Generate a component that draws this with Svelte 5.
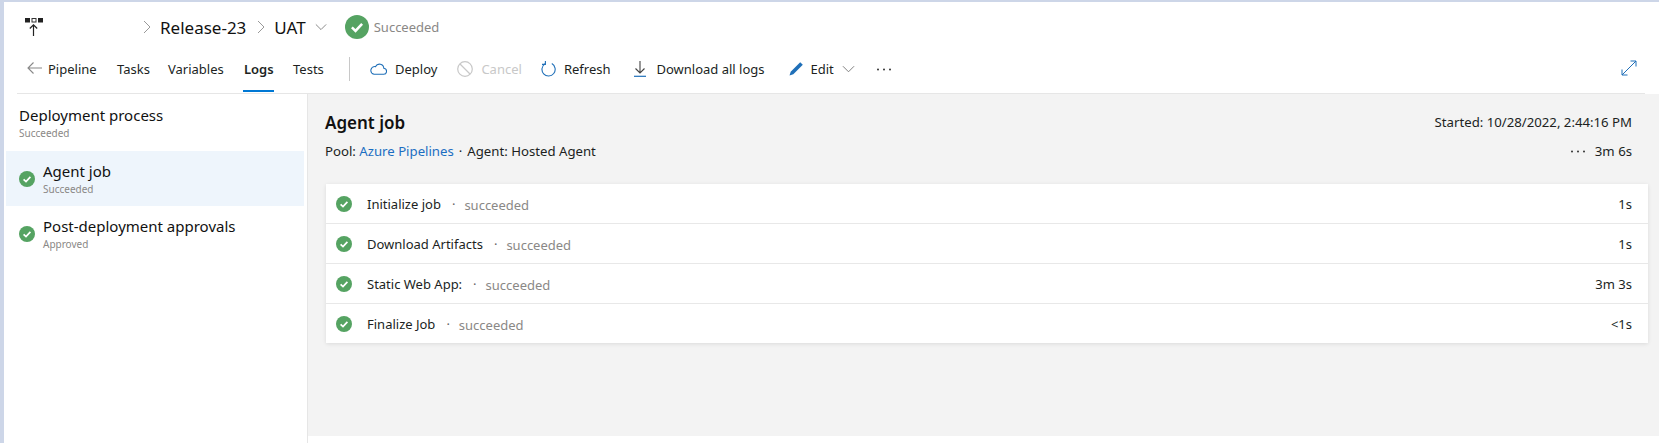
<script>
  const tabs = [
    { label: 'Pipeline', w: 69 },
    { label: 'Tasks', w: 51 },
    { label: 'Variables', w: 76 },
    { label: 'Logs', w: 49, active: true },
    { label: 'Tests', w: 40 }
  ];
  const steps = [
    { name: 'Initialize job', time: '1s' },
    { name: 'Download Artifacts', time: '1s' },
    { name: 'Static Web App:', time: '3m 3s' },
    { name: 'Finalize Job', time: '<1s' }
  ];
</script>

{#snippet check(size)}
  <svg class="check" width={size} height={size} viewBox="0 0 16 16" aria-hidden="true">
    <circle cx="8" cy="8" r="8" fill="#55a362" />
    <path d="M4.6 8.3 7 10.6 11.4 5.9" fill="none" stroke="#fff" stroke-width="1.7" />
  </svg>
{/snippet}

{#snippet chevron(w)}
  <svg width={w} height="8" viewBox="0 0 14 8" aria-hidden="true">
    <path d="M1 1l6 6 6-6" fill="none" stroke="#777" stroke-width="1" />
  </svg>
{/snippet}

{#snippet crumb()}
  <svg width="8" height="14" viewBox="0 0 8 14" aria-hidden="true">
    <path d="M1 1l6 6-6 6" fill="none" stroke="#999" stroke-width="1" />
  </svg>
{/snippet}

{#snippet dots()}
  <svg width="16" height="3" viewBox="0 0 16 3" aria-hidden="true">
    <circle cx="2" cy="1.5" r="1" fill="#333" />
    <circle cx="8" cy="1.5" r="1" fill="#333" />
    <circle cx="14" cy="1.5" r="1" fill="#333" />
  </svg>
{/snippet}

<div class="app">
  <header>
    <div class="title">
      <svg class="logo" width="20" height="20" viewBox="0 0 20 20" aria-hidden="true">
        <rect x="0" y="1" width="5" height="4.5" fill="#222" />
        <rect x="7" y="1.5" width="4" height="3.5" fill="#fff" stroke="#333" />
        <rect x="13" y="1" width="5" height="4.5" fill="#222" />
        <path d="M8.5 19V8M4.8 11.5l3.7-3.7 3.7 3.7" fill="none" stroke="#222" stroke-width="1.2" />
      </svg>
      <span class="crumb first">{@render crumb()}</span>
      <span class="name">Release-23</span>
      <span class="crumb">{@render crumb()}</span>
      <span class="name">UAT</span>
      <span class="drop">{@render chevron(12)}</span>
      <span class="big-check">{@render check(24)}</span>
      <span class="state">Succeeded</span>
    </div>
    <nav>
      <svg class="back" width="15" height="12" viewBox="0 0 15 12" aria-hidden="true">
        <path d="M15 6H1M6.5.5 1 6l5.5 5.5" fill="none" stroke="#888" stroke-width="1.1" />
      </svg>
      {#each tabs as t}
        <span class="tab" class:active={t.active} style="width:{t.w}px">{t.label}</span>
      {/each}
      <span class="divider"></span>
      <span class="cmd deploy">
        <svg width="17" height="12" viewBox="0 0 17 12" aria-hidden="true">
          <path d="M4 11.3h9.3a3 3 0 0 0 .5-6A4.3 4.3 0 0 0 5.6 3.6 3.9 3.9 0 0 0 4 11.3z" fill="none" stroke="#1f6fb8" stroke-width="1.1" />
        </svg>
        Deploy
      </span>
      <span class="cmd cancel">
        <svg width="16" height="16" viewBox="0 0 16 16" aria-hidden="true">
          <circle cx="8" cy="8" r="7.3" fill="none" stroke="#c8c8c8" stroke-width="1.2" />
          <path d="M3 3l10 10" stroke="#c8c8c8" stroke-width="1.2" />
        </svg>
        Cancel
      </span>
      <span class="cmd refresh">
        <svg width="15" height="16" viewBox="0 0 15 16" aria-hidden="true">
          <path d="M4 2.8a6.6 6.6 0 1 0 6.8-.2" fill="none" stroke="#1f6fb8" stroke-width="1.1" />
          <path d="M4.4 0v3.4H1" fill="none" stroke="#1f6fb8" stroke-width="1.1" />
        </svg>
        Refresh
      </span>
      <span class="cmd download">
        <svg width="16" height="16" viewBox="0 0 16 16" aria-hidden="true">
          <path d="M8 0v11.5M3.5 7.5 8 12l4.5-4.5" fill="none" stroke="#444" stroke-width="1.1" />
          <path d="M2 15.3h12" stroke="#1f6fb8" stroke-width="1.2" />
        </svg>
        Download all logs
      </span>
      <span class="cmd edit">
        <svg width="15" height="15" viewBox="0 0 15 15" aria-hidden="true">
          <path d="M0.5 14.5l1.2-3.8L11.2 1.2l2.6 2.6-9.5 9.5z" fill="#1f6fb8" />
        </svg>
        Edit
      </span>
      <span class="edit-drop">{@render chevron(13)}</span>
      <span class="more">{@render dots()}</span>
      <svg class="expand" width="16" height="16" viewBox="0 0 16 16" aria-hidden="true">
        <path d="M1 15 15 1M9.5 1H15v5.5M1 9.5V15h5.5" fill="none" stroke="#1f6fb8" stroke-width="1" />
      </svg>
    </nav>
  </header>

  <div class="body">
    <aside>
      <div class="process">
        <div class="item-title">Deployment process</div>
        <div class="item-sub">Succeeded</div>
      </div>
      <div class="item selected">
        {@render check(16)}
        <div>
          <div class="item-title">Agent job</div>
          <div class="item-sub">Succeeded</div>
        </div>
      </div>
      <div class="item">
        {@render check(16)}
        <div>
          <div class="item-title">Post-deployment approvals</div>
          <div class="item-sub">Approved</div>
        </div>
      </div>
    </aside>

    <main>
      <div class="job-head">
        <h1>Agent job</h1>
        <span>Started: 10/28/2022, 2:44:16 PM</span>
      </div>
      <div class="job-meta">
        <span>Pool: <a href="#pool">Azure Pipelines</a><span class="mid">·</span>Agent: Hosted Agent</span>
        <span class="total"><span class="total-dots">{@render dots()}</span>3m 6s</span>
      </div>
      <section class="card">
        {#each steps as s}
          <div class="row">
            {@render check(16)}
            <span class="step">{s.name}</span>
            <span class="sep">·</span>
            <span class="result">succeeded</span>
            <span class="time">{s.time}</span>
          </div>
        {/each}
      </section>
    </main>
  </div>
</div>

<style>
  :global(body) {
    margin: 0;
    background: #fff;
  }
  .app {
    width: 1659px;
    height: 443px;
    box-sizing: border-box;
    border-top: 2px solid #cdd6e8;
    border-left: 4px solid #cdd6e8;
    display: flex;
    flex-direction: column;
    font-family: "Noto Sans", "Open Sans", sans-serif;
    font-size: 13px;
    color: #201f1e;
    overflow: hidden;
  }
  svg {
    display: block;
    flex: none;
  }
  header {
    height: 92px;
    box-sizing: border-box;
    margin: 0 14px 0 13px;
    border-bottom: 1px solid #e6e6e6;
  }
  .title {
    height: 50px;
    display: flex;
    align-items: center;
    font-size: 17px;
  }
  .logo {
    margin-left: 8px;
  }
  .crumb.first {
    margin-left: 98px;
  }
  .crumb {
    display: block;
    margin: 0 9px 0 11px;
  }
  .name {
    color: #111;
  }
  .drop {
    margin-left: 9px;
  }
  .big-check {
    margin-left: 18px;
  }
  .state {
    margin-left: 5px;
    font-size: 13px;
    color: #8a8886;
  }
  nav {
    height: 41px;
    display: flex;
    align-items: center;
    position: relative;
  }
  .back {
    margin: -9px 6px 0 10px;
  }
  .tab {
    flex: none;
    height: 41px;
    line-height: 35px;
    box-sizing: border-box;
    position: relative;
  }
  .tab.active {
    font-weight: 600;
  }
  .tab.active::after {
    content: "";
    position: absolute;
    left: -1px;
    top: 38px;
    width: 31px;
    height: 2px;
    background: #0078d4;
  }
  .divider {
    width: 1px;
    height: 24px;
    background: #c8c8c8;
    margin: -8px 0 0 16px;
  }
  .cmd {
    display: flex;
    align-items: center;
    gap: 8px;
    margin-top: -8px;
  }
  .deploy {
    margin-left: 20px;
  }
  .cancel {
    margin-left: 20px;
    color: #c8c8c8;
  }
  .refresh {
    margin-left: 19px;
  }
  .download {
    margin-left: 22px;
    gap: 8px;
  }
  .edit {
    margin-left: 24px;
    gap: 7px;
  }
  .edit-drop {
    margin: -8px 0 0 8px;
  }
  .more {
    margin: -7px 0 0 21px;
  }
  .expand {
    margin: -10px 8px 0 auto;
  }
  .body {
    flex: 1;
    display: flex;
  }
  aside {
    width: 304px;
    flex: none;
    border-right: 1px solid #e6e6e6;
    box-sizing: border-box;
    padding-top: 11px;
  }
  .process {
    padding-left: 15px;
    height: 46px;
  }
  .item-title {
    font-size: 15px;
    line-height: 21px;
    color: #111;
  }
  .item-sub {
    font-size: 10px;
    line-height: 14px;
    color: #8a8886;
  }
  .item {
    display: flex;
    align-items: center;
    width: 298px;
    height: 55px;
    margin-left: 2px;
    padding-left: 13px;
    box-sizing: border-box;
    gap: 8px;
  }
  .selected {
    background: #eef5fc;
  }
  main {
    flex: 1;
    background: #f3f3f3;
    height: 342px;
    padding: 16px 11px 0 18px;
    box-sizing: border-box;
  }
  .job-head,
  .job-meta {
    display: flex;
    justify-content: space-between;
    align-items: center;
    padding-right: 16px;
    margin-left: -1px;
    font-size: 13.2px;
  }
  .job-head {
    height: 24px;
  }
  .job-meta {
    height: 22px;
    margin-top: 6px;
  }
  h1 {
    margin: 0;
    font-size: 17px;
    font-weight: 600;
    color: #111;
  }
  a {
    color: #1b6ec2;
    text-decoration: none;
  }
  .mid {
    margin: 0 5px;
  }
  .total {
    display: flex;
    align-items: center;
  }
  .total-dots {
    margin-right: 9px;
  }
  .card {
    margin-top: 22px;
    background: #fff;
    box-shadow: 0 1px 4px rgba(0, 0, 0, 0.1);
  }
  .row {
    height: 40px;
    display: flex;
    align-items: center;
    padding: 1px 16px 0 10px;
    box-sizing: border-box;
    border-bottom: 1px solid #e8e8e8;
  }
  .row:last-child {
    border-bottom: 0;
    height: 39px;
  }
  .step {
    margin-left: 15px;
  }
  .sep {
    margin: 0 9px 0 11px;
    color: #666;
  }
  .result {
    color: #8a8886;
    margin-top: 2px;
  }
  .time {
    margin-left: auto;
  }
</style>
